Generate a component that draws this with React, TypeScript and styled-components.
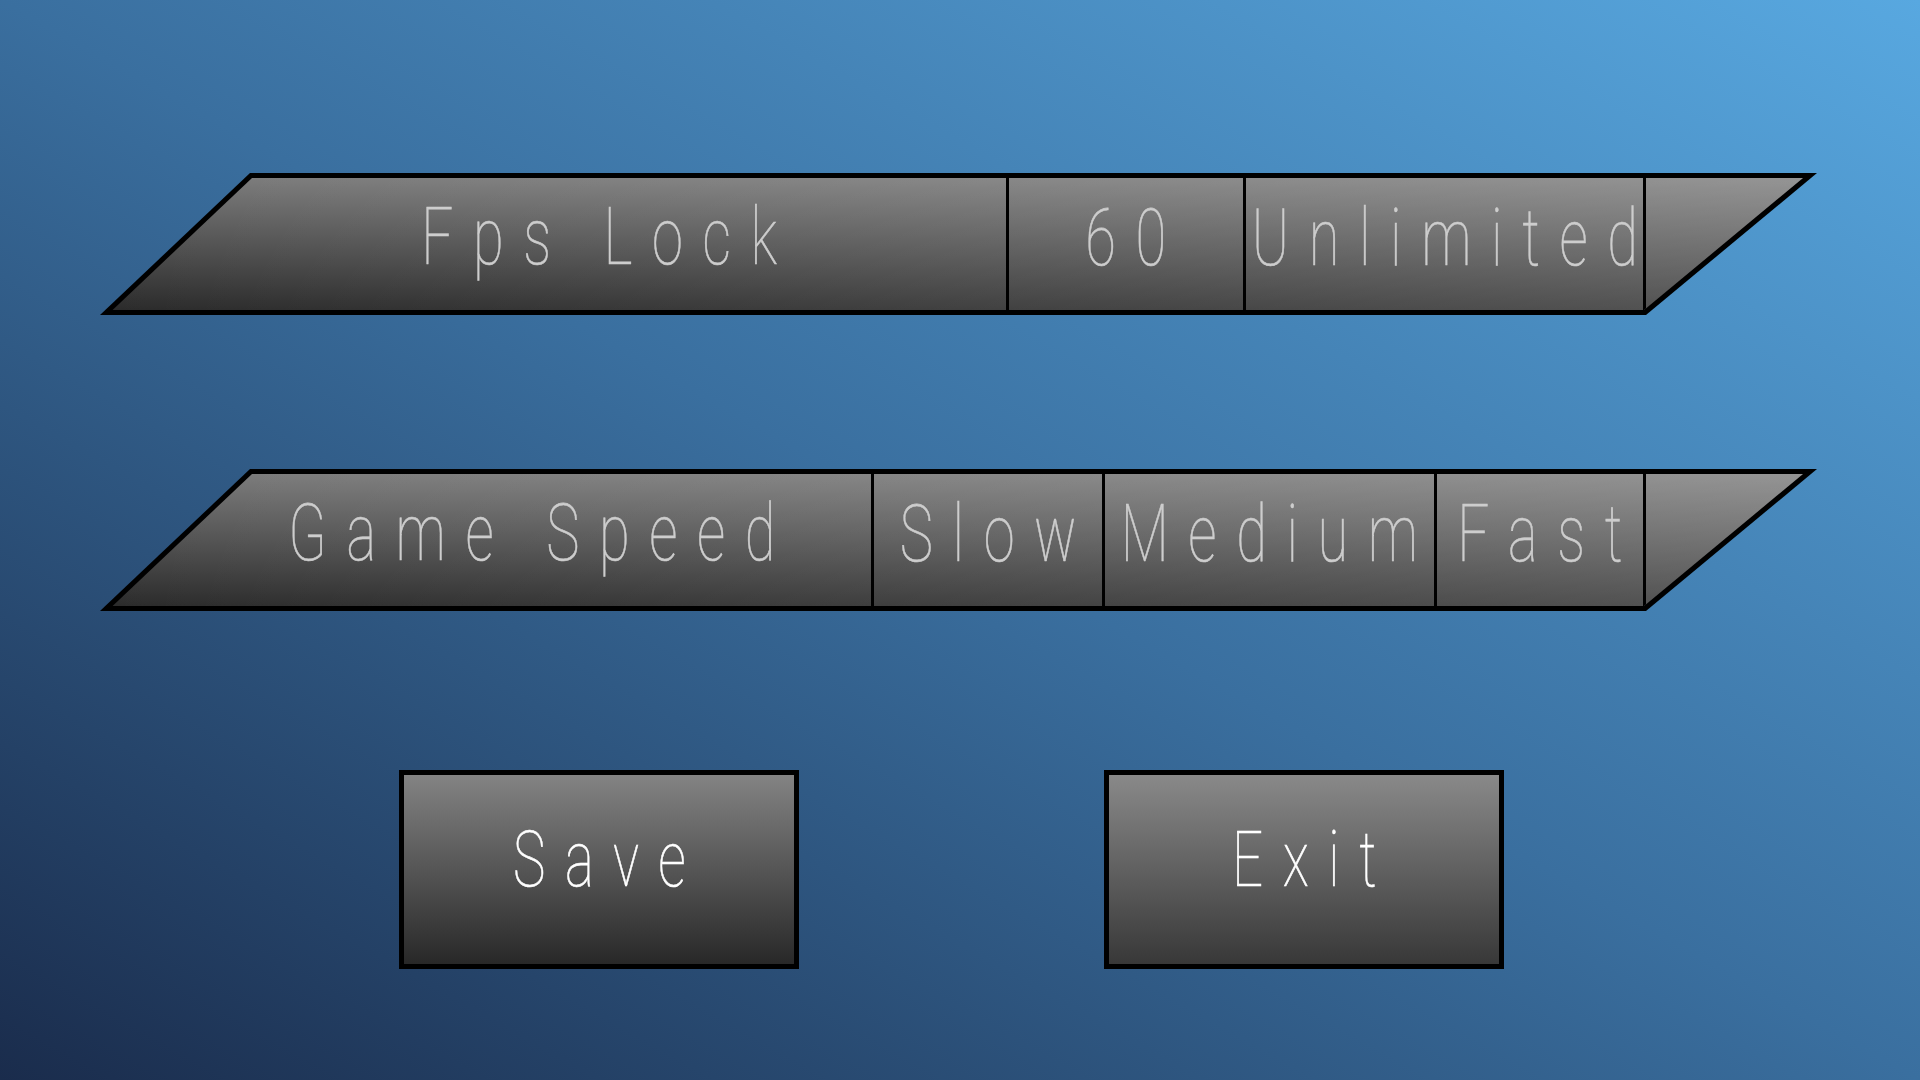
import React from "react";
import styled, { createGlobalStyle } from "styled-components";

const GlobalStyle = createGlobalStyle`
  html, body, #root { margin: 0; padding: 0; width: 100%; height: 100%; }
  body { overflow: hidden; font-family: Roboto, "Liberation Sans", sans-serif; }
`;

const Page = styled.div`
  width: 1920px;
  height: 1080px;
  box-sizing: border-box;
  padding: 173px 0 0 100px;
  display: flex;
  flex-direction: column;
  background: linear-gradient(to top right, #1a2c4c 0%, #3a6f9f 50%, #58a8e0 100%);
`;

const Bar = styled.div<{ $gap: number }>`
  width: 1717px;
  height: 142px;
  box-sizing: border-box;
  padding: 5px;
  display: flex;
  margin-bottom: ${(p) => p.$gap}px;
  background: #000;
  clip-path: polygon(150px 0, 100% 0, calc(100% - 171px) 100%, 0 100%);
`;

const BarInner = styled.div`
  flex: 1;
  min-width: 0;
  display: flex;
  background:
    linear-gradient(to right, rgba(255, 255, 255, 0) 0%, rgba(255, 255, 255, 0.2) 100%),
    linear-gradient(to bottom, #7a7a7a, #2b2b2b);
  clip-path: polygon(147px 0, calc(100% - 9px) 0, calc(100% - 168px) 100%, 7.6px 100%);
`;

const LabelCell = styled.div`
  flex: 1;
  min-width: 0;
  display: flex;
  align-items: center;
  justify-content: center;
  padding: 0 0 15px 88px;
`;

const OptionCell = styled.div<{ $w: number }>`
  width: ${(p) => p.$w}px;
  flex-shrink: 0;
  box-sizing: border-box;
  border-left: 3px solid #000;
  display: flex;
  align-items: center;
  justify-content: center;
  padding-bottom: 13px;
`;

const Text = styled.span<{ $size: number; $color: string }>`
  display: inline-block;
  flex-shrink: 0;
  white-space: nowrap;
  font-family: Roboto, "Liberation Sans", sans-serif;
  font-weight: 100;
  font-size: ${(p) => p.$size}px;
  line-height: 1;
  letter-spacing: 28px;
  padding-left: 28px;
  color: ${(p) => p.$color};
  -webkit-text-stroke: 0.6px ${(p) => p.$color};
  transform: scaleX(0.7);
  transform-origin: center;
`;

const ButtonRow = styled.div`
  display: flex;
  gap: 305px;
  margin-left: 299px;
`;

const Button = styled.button<{ $top: string; $bottom: string }>`
  width: 400px;
  height: 199px;
  box-sizing: border-box;
  border: 5px solid #000;
  border-radius: 0;
  margin: 0;
  padding: 0 0 20px 0;
  display: flex;
  align-items: center;
  justify-content: center;
  background: linear-gradient(to bottom, ${(p) => p.$top}, ${(p) => p.$bottom});
  cursor: pointer;
`;

type Row = { label: string; options: { text: string; w: number }[]; gap: number };

const rows: Row[] = [
  {
    label: "Fps Lock",
    options: [
      { text: "60", w: 237 },
      { text: "Unlimited", w: 400 },
    ],
    gap: 154,
  },
  {
    label: "Game Speed",
    options: [
      { text: "Slow", w: 231 },
      { text: "Medium", w: 332 },
      { text: "Fast", w: 209 },
    ],
    gap: 159,
  },
];

export default function App() {
  return (
    <>
      <GlobalStyle />
      <Page>
        {rows.map((row) => (
          <Bar key={row.label} $gap={row.gap}>
            <BarInner>
              <LabelCell>
                <Text $size={80} $color="#cdcdcd">{row.label}</Text>
              </LabelCell>
              {row.options.map((o) => (
                <OptionCell key={o.text} $w={o.w}>
                  <Text $size={80} $color="#cdcdcd">{o.text}</Text>
                </OptionCell>
              ))}
              <OptionCell $w={169} />
            </BarInner>
          </Bar>
        ))}
        <ButtonRow>
          <Button $top="#838383" $bottom="#282828">
            <Text $size={78} $color="#ffffff">Save</Text>
          </Button>
          <Button $top="#898989" $bottom="#383838">
            <Text $size={78} $color="#ffffff">Exit</Text>
          </Button>
        </ButtonRow>
      </Page>
    </>
  );
}
